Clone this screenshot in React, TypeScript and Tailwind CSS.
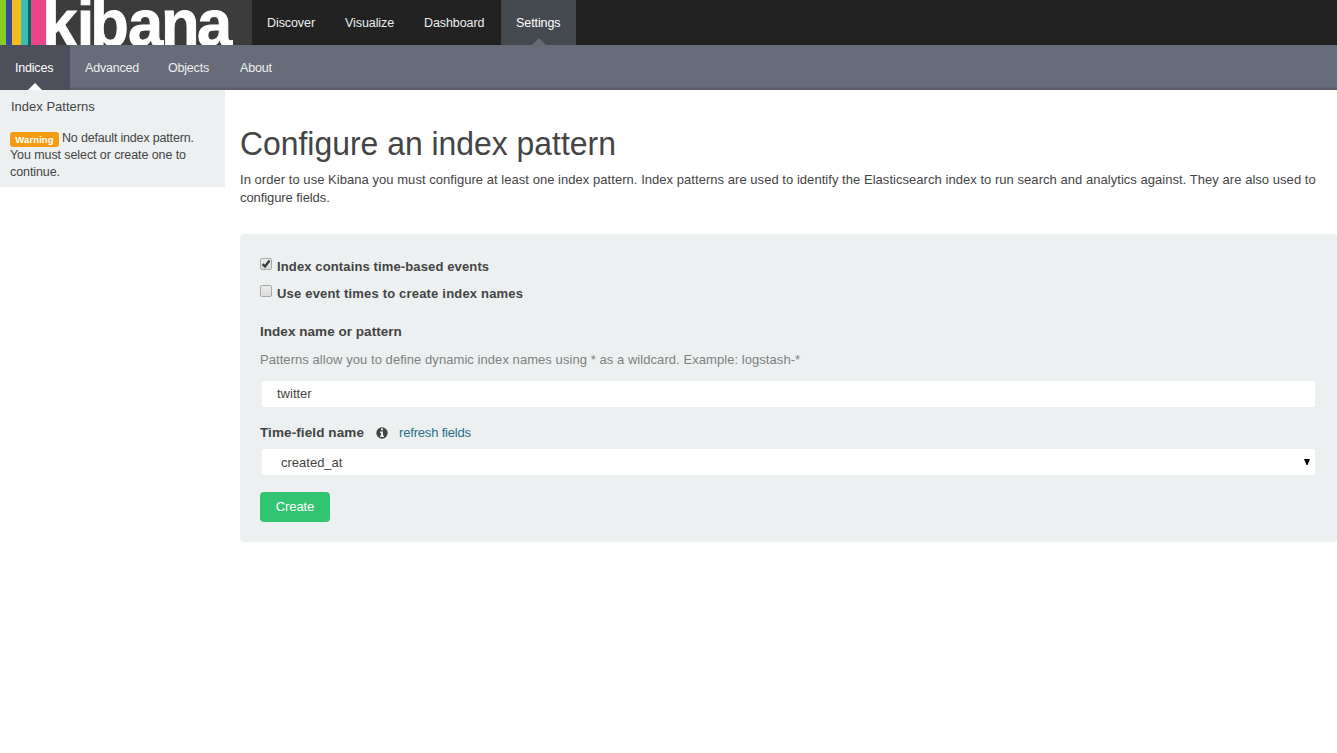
import { useState } from "react";

const topTabs = [
  { label: "Discover", width: "w-[78px]" },
  { label: "Visualize", width: "w-[79px]" },
  { label: "Dashboard", width: "w-[92px]" },
  { label: "Settings", width: "w-[75px]" },
];

const subTabs = [
  { label: "Indices", width: "w-[70px]" },
  { label: "Advanced", width: "w-[83px]" },
  { label: "Objects", width: "w-[72px]" },
  { label: "About", width: "w-[61px]" },
];

function Logo() {
  return (
    <svg className="block h-[45px] w-[252px] shrink-0" viewBox="0 0 252 45" role="img" aria-label="kibana">
      <rect width="252" height="45" fill="#3c3c3c" />
      <rect width="6" height="45" fill="#86cc1f" />
      <rect x="6" width="6" height="45" fill="#354a9b" />
      <rect x="12" width="9" height="45" fill="#f5bd1c" />
      <rect x="21" width="7" height="45" fill="#3bbeb1" />
      <rect x="28" width="3" height="45" fill="#046a5c" />
      <rect x="31" width="15" height="45" fill="#ed458c" />
      <g transform="translate(0 46.3) scale(0.95 1)">
        <text
          y="0"
          x="44.4 80.8 94.9 134.7 169.5 207.3"
          fill="#fff"
          stroke="#fff"
          strokeWidth="0.9"
          fontSize="66.5"
          fontWeight="700"
          fontFamily="Liberation Sans, Arial, sans-serif"
        >
          kibana
        </text>
      </g>
    </svg>
  );
}

function Pointer({ className }: { className: string }) {
  return (
    <svg className={`absolute bottom-0 left-1/2 h-[7px] w-[14px] -translate-x-1/2 ${className}`} viewBox="0 0 14 7">
      <path d="M0 7L7 0l7 7z" fill="currentColor" />
    </svg>
  );
}

function Checkbox({ label, initial, tracking }: { label: string; initial: boolean; tracking: string }) {
  const [checked, setChecked] = useState(initial);
  return (
    <label className="flex h-[27px] items-start text-[13px] leading-[18px] font-bold">
      <button
        type="button"
        role="checkbox"
        aria-checked={checked}
        aria-label={label}
        onClick={() => setChecked(!checked)}
        className="mr-[5px] h-[12px] w-[12px] rounded-[2px] border border-[#a9abab] bg-linear-to-b from-[#ececec] to-[#dcdcdc]"
      >
        {checked && (
          <svg className="block h-[10px] w-[10px]" viewBox="0 0 10 10">
            <path d="M1.6 5.2L4 7.5 8.6 1.5" fill="none" stroke="#3c3c3c" strokeWidth="2.4" />
          </svg>
        )}
      </button>
      <span className={tracking}>{label}</span>
    </label>
  );
}

export default function App() {
  return (
    <div className="min-h-[753px] bg-white font-['Liberation_Sans',Arial,sans-serif] text-[13px] leading-[18px] text-[#444444]">
      <nav className="flex h-[45px] bg-[#222222] text-[12.5px] tracking-[-0.08px] text-[#ecf0f1]">
        <Logo />
        {topTabs.map((tab) => (
          <a
            key={tab.label}
            className={`relative flex items-center pl-[15px] ${tab.width} ${tab.label === "Settings" ? "bg-[#444950] text-white" : ""}`}
          >
            {tab.label}
            {tab.label === "Settings" && <Pointer className="text-[#656a76]" />}
          </a>
        ))}
      </nav>
      <nav className="flex h-[45px] bg-linear-to-b from-[#686c79] from-90% to-[#585b67] text-[12.5px] tracking-[-0.2px] text-[#ecf0f1]">
        {subTabs.map((tab) => (
          <a
            key={tab.label}
            className={`relative flex items-center pl-[15px] ${tab.width} ${tab.label === "Indices" ? "bg-[#4d505b] text-white" : ""}`}
          >
            {tab.label}
            {tab.label === "Indices" && <Pointer className="text-white" />}
          </a>
        ))}
      </nav>

      <div className="flex items-start">
        <aside className="h-[97px] w-[225px] shrink-0 bg-[#ecf0f1] pt-[8px] pl-[10px]">
          <h5 className="pl-px">Index Patterns</h5>
          <p className="mt-[14px] w-[200px] text-[12.5px] leading-[17px] tracking-[-0.09px]">
            <span className="mt-[2px] mr-[3px] -mb-[2px] inline-block h-[15px] w-[49px] rounded-[3px] bg-[#f39c12] text-center align-top text-[9.5px] leading-[15px] font-bold tracking-[0.1px] text-white">
              Warning
            </span>
            <span className="tracking-[-0.18px]">No default index pattern.</span>
            <br />
            You must select or create one to continue.
          </p>
        </aside>

        <main className="ml-[15px] min-w-0 flex-1 pt-[35px]">
          <h1 className="origin-left scale-x-[0.938] text-[34px] leading-[36px]">Configure an index pattern</h1>
          <p className="mt-[10px] w-[1090px] tracking-[0.042px]">
            In order to use Kibana you must configure at least one index pattern. Index patterns are used to identify the
            Elasticsearch index to run search and analytics against. They are also used to{" "}
            <span className="tracking-[-0.08px]">configure fields.</span>
          </p>

          <form className="mt-[27px] h-[308px] rounded-[4px] bg-[#ecf0f1] pt-[24px] pr-[20px] pl-[20px]">
            <Checkbox label="Index contains time-based events" initial={true} tracking="tracking-[0.13px]" />
            <Checkbox label="Use event times to create index names" initial={false} tracking="tracking-[0.19px]" />
            <div className="mt-[11px] text-[13.5px] font-bold tracking-[0.04px]">Index name or pattern</div>
            <p className="mt-[10px] tracking-[0.06px] text-[#7f8080]">
              Patterns allow you to define dynamic index names using * as a wildcard. Example: logstash-*
            </p>
            <input
              defaultValue="twitter"
              aria-label="Index name or pattern"
              className="mt-[12px] ml-[2px] block h-[26px] w-[1053px] rounded-[2px] bg-white px-[15px] pb-px outline-none"
            />
            <div className="mt-[17px] flex h-[18px] items-center">
              <span className="w-[104px] text-[13.5px] font-bold tracking-[0.1px] whitespace-nowrap">Time-field name</span>
              <svg className="ml-[11.5px] h-[12px] w-[12px]" viewBox="0 0 12 12">
                <circle cx="6" cy="6" r="5.7" fill="#444" />
                <path d="M5 1.6h2v1.7H5zM4.1 4.5H7v4h.9V10H4.1V8.5H5V6h-.9z" fill="#ecf0f1" />
              </svg>
              <a className="ml-[11.5px] tracking-[-0.18px] text-[#286f87]">refresh fields</a>
            </div>
            <div className="mt-[7px] ml-[2px] flex h-[26px] w-[1053px] items-center justify-between rounded-[2px] bg-white pr-[5px] pl-[19px]">
              <span className="pt-[2px]">created_at</span>
              <svg className="h-[6px] w-[6px]" viewBox="0 0 6 6">
                <path d="M0 0h6L3.5 6h-1z" fill="#000" />
              </svg>
            </div>
            <button type="button" className="mt-[17px] block h-[30px] w-[70px] rounded-[4px] bg-[#31c471] tracking-[-0.1px] text-white">
              Create
            </button>
          </form>
        </main>
      </div>
    </div>
  );
}
